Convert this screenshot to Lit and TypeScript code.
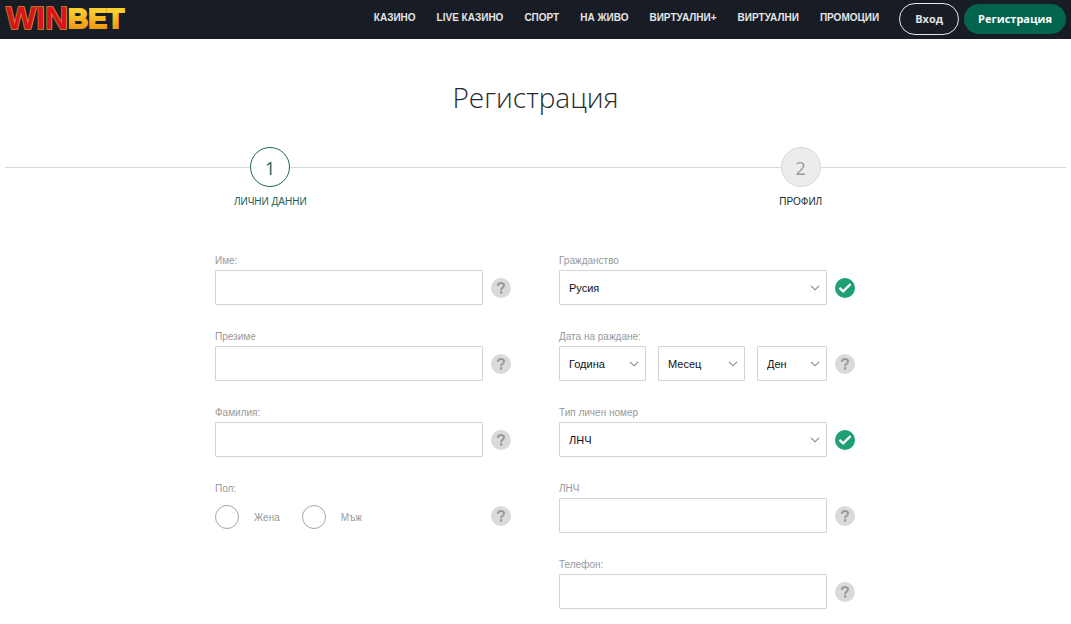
import { LitElement, html, css, svg } from "lit";
import { customElement, property } from "lit/decorators.js";

type Status = "help" | "ok";

@customElement("status-icon")
class StatusIcon extends LitElement {
  @property() status: Status = "help";

  static styles = css`
    :host { display: block; width: 20px; height: 20px; }
    .icon { display: block; width: 20px; height: 20px; }
  `;

  render() {
    return html`<svg class="icon" viewBox="0 0 20 20" aria-hidden="true">
      ${this.status === "ok"
        ? svg`<circle cx="10" cy="10" r="10" fill="#1f9f74"/>
            <path d="M4.4 9.8 8.2 13.4 15.6 6" fill="none" stroke="#fff" stroke-width="2.4"/>`
        : svg`<circle cx="10" cy="10" r="10" fill="#d8dadb"/>
            <path d="M6.9 8c0-2 1.3-3.1 3.1-3.1S13 6 13 7.6c0 2.2-2.9 2.2-2.9 4.6" fill="none" stroke="#97999b" stroke-width="2"/>
            <rect x="9" y="13.3" width="2.2" height="2.3" fill="#97999b"/>`}
    </svg>`;
  }
}

@customElement("app-root")
class AppRoot extends LitElement {
  static styles = css`
    :host {
      display: block;
      min-height: 100vh;
      background: #fff;
      font-family: "Liberation Sans", Arial, sans-serif;
      font-size: 10px;
      color: #1f2a30;
    }
    * { box-sizing: border-box; }
    .header {
      display: flex;
      align-items: center;
      justify-content: space-between;
      height: 39px;
      padding: 0 5px;
      background: #181c25;
    }
    .logo { display: block; }
    .logo-art { display: block; width: 124px; height: 39px; }
    .logo-text { font-family: "Liberation Sans", Arial, sans-serif; font-weight: 700; paint-order: stroke; }
    .logo-win { font-size: 32px; }
    .logo-bet { font-size: 28px; }
    .right { display: flex; align-items: center; gap: 20px; padding-bottom: 2px; }
    .nav { display: flex; gap: 21px; padding-bottom: 2px; }
    .nav-link {
      color: #e3e4e6;
      font-weight: 700;
      line-height: 16px;
      text-decoration: none;
      white-space: nowrap;
    }
    .actions { display: flex; align-items: center; gap: 5px; }
    .btn {
      height: 30px;
      padding: 0 14px;
      border: 0;
      border-radius: 16px;
      background: #04654f;
      color: #fff;
      font: 700 11px "Open Sans", sans-serif;
    }
    .btn-outline { height: 32px; padding: 0 15px; border: 1px solid #e6e7e9; background: transparent; color: #e3e4e6; }
    .title {
      margin: 0;
      padding: 37px 0 29px;
      font: 300 28px/42px "Open Sans", sans-serif;
      text-align: center;
    }
    .steps { display: flex; margin: 0; padding: 0 5px; list-style: none; }
    .step { flex: 1; text-align: center; line-height: 14px; }
    .track { display: flex; align-items: center; margin-bottom: 8px; }
    .track::before, .track::after { content: ""; flex: 1; height: 1px; background: #d6d8d9; }
    .dot {
      width: 40px;
      height: 40px;
      border: 1px solid #d6d8d9;
      border-radius: 50%;
      background: #ececec;
      color: #999;
      font: 18px/40px "Open Sans", sans-serif;
    }
    .current { color: #1d6355; }
    .current .dot { border-color: #1d6355; background: #fff; color: #1d6355; }
    .form {
      display: grid;
      grid-template-columns: 1fr 1fr;
      gap: 48px;
      max-width: 641px;
      margin: 0 auto;
      padding: 44px 1px 16px 0;
    }
    .column { display: flex; flex-direction: column; gap: 24px; }
    .field { margin: 0; padding: 0; border: 0; min-width: 0; color: #999; }
    .label { display: block; float: left; padding: 0; margin-bottom: 1px; line-height: 16px; }
    .row { clear: both; display: flex; align-items: center; gap: 8px; }
    .controls { flex: 1; min-width: 0; display: flex; gap: 12px; }
    .input, .select {
      width: 100%;
      height: 35px;
      margin: 0;
      padding: 0 9px;
      border: 1px solid #d2d4d5;
      border-radius: 1px;
      background: #fff;
      color: #111;
      font: 11px "Liberation Sans", Arial, sans-serif;
      outline: 0;
    }
    .select { appearance: none; grid-area: 1 / 1; }
    .select-box { display: grid; align-items: center; flex: 268 1 0; min-width: 0; }
    .part { flex: 87 1 0; }
    .part-short { flex: 70 1 0; }
    .chevron { grid-area: 1 / 1; justify-self: end; width: 10px; height: 6px; margin-right: 7px; pointer-events: none; }
    .choices { display: flex; align-items: center; gap: 22px; height: 35px; }
    .choice { display: flex; align-items: center; gap: 15px; padding-top: 3px; }
    .radio {
      appearance: none;
      width: 24px;
      height: 24px;
      margin: 0;
      border: 1px solid #a3a5a6;
      border-radius: 50%;
      background: #fff;
    }
    .radio:checked { border: 7px solid #1f9f74; }
  `;

  private nav = ["КАЗИНО", "LIVE КАЗИНО", "СПОРТ", "НА ЖИВО", "ВИРТУАЛНИ+", "ВИРТУАЛНИ", "ПРОМОЦИИ"];

  private text(id: string, label: string) {
    return html`<div class="field">
      <label class="label" for=${id}>${label}</label>
      <div class="row">
        <div class="controls"><input class="input" id=${id} type="text" /></div>
        <status-icon></status-icon>
      </div>
    </div>`;
  }

  private select(id: string, option: string, size = "", label = "") {
    return html`<div class="select-box ${size}">
      <select class="select" id=${id} aria-label=${label || option}><option>${option}</option></select>
      <svg class="chevron" viewBox="0 0 10 6" aria-hidden="true">
        <path d="M1 .8 5 4.8 9 .8" fill="none" stroke="#85878a" stroke-width="1.1" />
      </svg>
    </div>`;
  }

  private choice(id: string, label: string, options: string) {
    return html`<div class="field">
      <label class="label" for=${id}>${label}</label>
      <div class="row">
        <div class="controls">${this.select(id, options, "", label)}</div>
        <status-icon status="ok"></status-icon>
      </div>
    </div>`;
  }

  render() {
    return html`
      <header class="header">
        <a class="logo" href="#" aria-label="WINBET">
          <svg class="logo-art" viewBox="0 0 124 39">
            <defs>
              <linearGradient id="gold" x1="0" y1="0" x2="0" y2="1">
                <stop offset="0.25" stop-color="#fbd030" />
                <stop offset="0.8" stop-color="#f09a14" />
              </linearGradient>
            </defs>
            <text class="logo-text logo-win" x="1" y="29" fill="#d8141c" stroke="#dc8a24" stroke-width="1.6">WIN</text>
            <text class="logo-text logo-bet" x="63" y="28" fill="url(#gold)" stroke="url(#gold)" stroke-width="2">BET</text>
          </svg>
        </a>
        <div class="right">
          <nav class="nav">${this.nav.map((n) => html`<a class="nav-link" href="#">${n}</a>`)}</nav>
          <div class="actions">
            <button class="btn btn-outline" type="button">Вход</button>
            <button class="btn" type="button">Регистрация</button>
          </div>
        </div>
      </header>
      <main>
        <h1 class="title">Регистрация</h1>
        <ol class="steps">
          <li class="step current"><div class="track"><span class="dot">1</span></div>ЛИЧНИ ДАННИ</li>
          <li class="step"><div class="track"><span class="dot">2</span></div>ПРОФИЛ</li>
        </ol>
        <form class="form">
          <div class="column">
            ${this.text("first", "Име:")} ${this.text("middle", "Презиме")} ${this.text("last", "Фамилия:")}
            <fieldset class="field">
              <legend class="label">Пол:</legend>
              <div class="row">
                <div class="controls choices">
                  <label class="choice"><input class="radio" type="radio" name="sex" />Жена</label>
                  <label class="choice"><input class="radio" type="radio" name="sex" />Мъж</label>
                </div>
                <status-icon></status-icon>
              </div>
            </fieldset>
          </div>
          <div class="column">
            ${this.choice("citizenship", "Гражданство", "Русия")}
            <fieldset class="field">
              <legend class="label">Дата на раждане:</legend>
              <div class="row">
                <div class="controls">
                  ${this.select("year", "Година", "part")} ${this.select("month", "Месец", "part")}
                  ${this.select("day", "Ден", "part-short")}
                </div>
                <status-icon></status-icon>
              </div>
            </fieldset>
            ${this.choice("idtype", "Тип личен номер", "ЛНЧ")} ${this.text("lnch", "ЛНЧ")}
            ${this.text("phone", "Телефон:")}
          </div>
        </form>
      </main>
    `;
  }
}
